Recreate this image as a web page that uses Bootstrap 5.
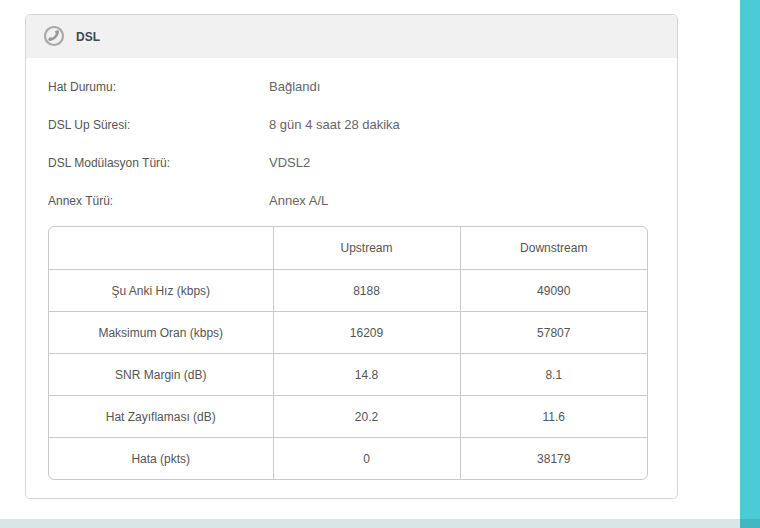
<!DOCTYPE html>
<html lang="tr">
<head>
<meta charset="utf-8">
<title>DSL</title>
<link href="https://cdn.jsdelivr.net/npm/bootstrap@5.3.0/dist/css/bootstrap.min.css" rel="stylesheet">
<style>
html,body{height:528px;overflow:hidden;background:#fff;}
body{font-family:"Liberation Sans",Arial,sans-serif;color:#555;}
.page-wrap{height:528px;}
.main-area{width:740px;}
.main-body{height:519px;padding:14px 62px 0 25px;}
.foot-strip{height:9px;background:#dae5e5;}
.side-strip{width:20px;background:#4acbd6;}
.side-end{height:9px;background:#3fb8c4;}
.dsl-panel{height:485px;border:1px solid #d6d6d6;border-radius:5px;overflow:hidden;}
.dsl-head{height:43px;background:#f1f1f1;padding-left:18px;gap:11px;}
.dsl-title{font-size:12px;font-weight:700;color:#3d4852;}
.dsl-rows{padding:10px 29px 0 22px;}
.info-row{height:38px;}
.info-label{width:221px;font-size:12px;color:#555;}
.info-value{font-size:13px;color:#666;}
.rate-box{width:600px;border:1px solid #c9c9c9;border-radius:6px;overflow:hidden;margin-top:6px;}
.rate-table{width:100%;table-layout:fixed;border-collapse:collapse;font-size:12px;color:#555;}
.rate-table td{height:42px;padding:0;text-align:center;vertical-align:middle;border:1px solid #c9c9c9;}
.rate-table tr:first-child td{border-top:0;height:42px;}
.rate-table tr + tr td{padding-top:2px;}
.rate-table tr:last-child td{border-bottom:0;}
.rate-table td:first-child{border-left:0;width:224px;}
.rate-table td:last-child{border-right:0;}
.rate-table td:nth-child(2){width:187px;}
</style>
</head>
<body>
<div class="page-wrap d-flex">
  <div class="main-area d-flex flex-column">
    <div class="main-body">
      <div class="dsl-panel">
        <div class="dsl-head d-flex align-items-center">
          <svg width="21" height="21" viewBox="0 0 21 21" fill="none" aria-hidden="true">
            <circle cx="10" cy="10" r="9" stroke="#aaa" stroke-width="2.2"/>
            <path d="M13.500 5.500C13.500 9.800 10 13.500 5.500 13.500" stroke="#999" stroke-width="2.600" stroke-linecap="round"/>
            <path d="M10.800 5.200L14.500 4.600 14.800 7.500 12 8ZM5 11.500L8 11.500 8.500 14.200 5 15Z" fill="#999"/>
          </svg>
          <span class="dsl-title">DSL</span>
        </div>
        <div class="dsl-rows">
          <div class="info-row d-flex align-items-center"><div class="info-label">Hat Durumu:</div><div class="info-value">Bağlandı</div></div>
          <div class="info-row d-flex align-items-center"><div class="info-label">DSL Up Süresi:</div><div class="info-value">8 gün 4 saat 28 dakika</div></div>
          <div class="info-row d-flex align-items-center"><div class="info-label">DSL Modülasyon Türü:</div><div class="info-value">VDSL2</div></div>
          <div class="info-row d-flex align-items-center"><div class="info-label">Annex Türü:</div><div class="info-value">Annex A/L</div></div>
          <div class="rate-box">
            <table class="rate-table">
              <tr><td></td><td>Upstream</td><td>Downstream</td></tr>
              <tr><td>Şu Anki Hız (kbps)</td><td>8188</td><td>49090</td></tr>
              <tr><td>Maksimum Oran (kbps)</td><td>16209</td><td>57807</td></tr>
              <tr><td>SNR Margin (dB)</td><td>14.8</td><td>8.1</td></tr>
              <tr><td>Hat Zayıflaması (dB)</td><td>20.2</td><td>11.6</td></tr>
              <tr><td>Hata (pkts)</td><td>0</td><td>38179</td></tr>
            </table>
          </div>
        </div>
      </div>
    </div>
    <div class="foot-strip"></div>
  </div>
  <div class="side-strip d-flex flex-column justify-content-end"><div class="side-end"></div></div>
</div>
<script src="https://cdn.jsdelivr.net/npm/bootstrap@5.3.0/dist/js/bootstrap.bundle.min.js"></script>
</body>
</html>
